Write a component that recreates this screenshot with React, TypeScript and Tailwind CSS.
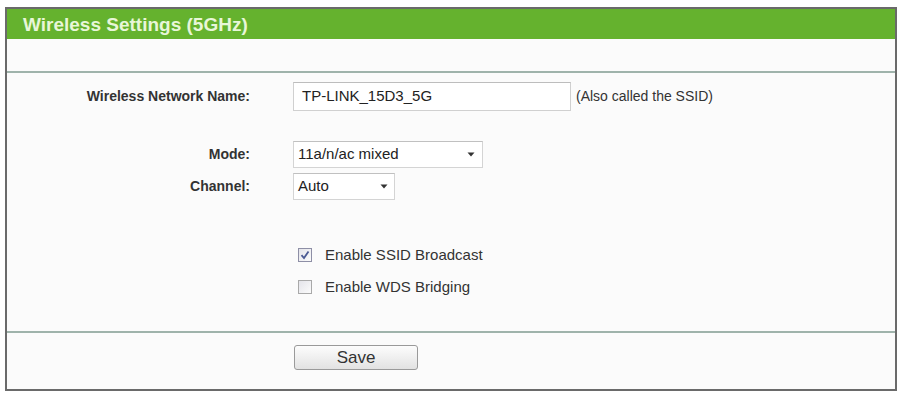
import React from "react";

function Caret() {
  return (
    <svg width="8" height="5" viewBox="0 0 8 5" className="block">
      <path d="M0.5 0.5 L7.5 0.5 L4 4.5 Z" fill="#333" />
    </svg>
  );
}

function Checkbox({ checked }: { checked: boolean }) {
  return (
    <div
      className={
        "w-[14px] h-[14px] border flex items-center justify-center bg-gradient-to-br from-[#e4e4ea] to-[#fbfbfb] " +
        (checked ? "border-[#8e8fa6]" : "border-[#a9a9a9]")
      }
    >
      {checked && (
        <svg width="10" height="10" viewBox="0 0 10 10">
          <path d="M1.5 5.2 L4 8 L8.5 1.5" stroke="#4b5a93" strokeWidth="1.8" fill="none" />
        </svg>
      )}
    </div>
  );
}

export default function App() {
  return (
    <div className="w-[900px] h-[395px] bg-white pt-[7px] pl-[5px] font-['Liberation_Sans',Arial,sans-serif]">
      <div className="w-[892px] h-[384px] border-2 border-[#6a6a6a] bg-[#fbfbfb] flex flex-col">
        <div className="h-[30px] bg-[#65b22e] flex items-center pl-[16px]">
          <span className="text-[19px] font-bold text-[#e8f6d8] leading-none">Wireless Settings (5GHz)</span>
        </div>
        <div className="h-[32px] border-b-2 border-[#9fb3ab] box-content" />
        <div className="flex flex-col pt-[9px] h-[258px]">
          <div className="flex items-center h-[29px]">
            <div className="w-[243px] text-right text-[14px] font-bold text-[#333]">Wireless Network Name:</div>
            <div className="ml-[43px] w-[278px] h-[29px] border border-[#d0d0d0] border-t-[#bdbdbd] bg-white flex items-center pl-[8px] text-[15px] text-[#222]">
              TP-LINK_15D3_5G
            </div>
            <span className="ml-[5px] text-[14px] text-[#333]">(Also called the SSID)</span>
          </div>
          <div className="flex items-center h-[27px] mt-[30px]">
            <div className="w-[243px] text-right text-[14px] font-bold text-[#333]">Mode:</div>
            <div className="ml-[43px] w-[190px] h-[27px] border border-[#d4d4d4] border-t-[#c0c0c0] bg-white flex items-center justify-between pl-[4px] pr-[7px] text-[15px] text-[#222]">
              <span>11a/n/ac mixed</span>
              <Caret />
            </div>
          </div>
          <div className="flex items-center h-[27px] mt-[5px]">
            <div className="w-[243px] text-right text-[14px] font-bold text-[#333]">Channel:</div>
            <div className="ml-[43px] w-[102px] h-[27px] border border-[#d4d4d4] border-t-[#c0c0c0] bg-white flex items-center justify-between pl-[4px] pr-[6px] text-[15px] text-[#222]">
              <span>Auto</span>
              <Caret />
            </div>
          </div>
          <div className="flex items-center h-[32px] mt-[39px] pl-[291px]">
            <Checkbox checked />
            <span className="ml-[13px] text-[15px] text-[#333]">Enable SSID Broadcast</span>
          </div>
          <div className="flex items-center h-[32px] pl-[291px]">
            <Checkbox checked={false} />
            <span className="ml-[13px] text-[15px] text-[#333]">Enable WDS Bridging</span>
          </div>
        </div>
        <div className="border-t-2 border-[#9fb3ab] flex-1 pt-[12px] pl-[287px]">
          <button className="w-[124px] h-[25px] rounded-[3px] border border-[#9a9a9a] bg-gradient-to-b from-[#fdfdfd] to-[#e2e2e2] text-[17px] text-[#333] leading-none flex items-center justify-center">
            Save
          </button>
        </div>
      </div>
    </div>
  );
}
